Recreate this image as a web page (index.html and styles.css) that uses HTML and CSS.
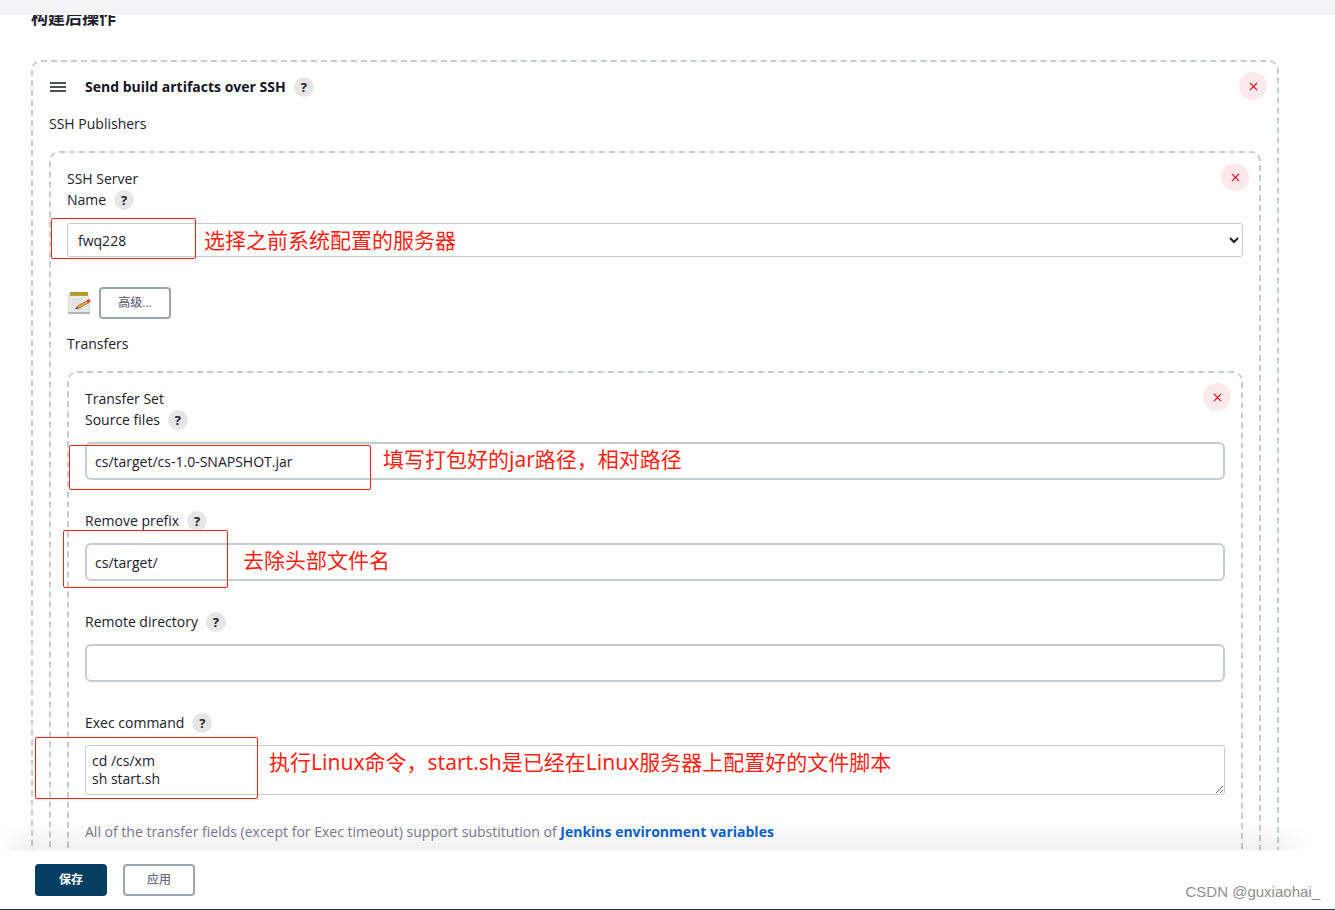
FILE: index.html
```html
<!DOCTYPE html>
<html lang="zh-CN">
<head>
<meta charset="utf-8">
<title>构建后操作</title>
<link rel="stylesheet" href="styles.css">
</head>
<body>
<div class="topbar"></div>
<main class="content">
  <h2 class="section-title">构建后操作</h2>
  <section class="chunk chunk-outer">
    <button class="remove" type="button" aria-label="Remove publisher"><svg viewBox="0 0 10 10"><path d="M1 1l8 8M9 1L1 9"/></svg></button>
    <div class="row title-row">
      <svg class="grip" viewBox="0 0 16 10"><path d="M0 1h16M0 5h16M0 9h16"/></svg>
      <b>Send build artifacts over SSH</b>
      <button class="help" type="button" aria-label="Help: SSH">?</button>
    </div>
    <div class="row publishers">SSH Publishers</div>
    <section class="chunk">
      <button class="remove" type="button" aria-label="Remove server"><svg viewBox="0 0 10 10"><path d="M1 1l8 8M9 1L1 9"/></svg></button>
      <div class="row">SSH Server</div>
      <div class="row"><label for="server">Name</label><button class="help" type="button" aria-label="Help: Name">?</button></div>
      <div class="field field-server">
        <select id="server" class="select"><option>fwq228</option></select>
        <span class="mark mark-server"></span>
        <span class="note note-server">选择之前系统配置的服务器</span>
      </div>
      <div class="advanced">
        <svg class="notepad" viewBox="0 0 24 24">
          <path d="M2 3h19l2 18.500H1z" fill="#e9eae6" stroke="#d6d7d3"/>
          <path d="M1 21h22v2H1z" fill="#b4b5b2"/>
          <path d="M3 1h18v4H3z" fill="#b5a034"/>
          <path d="M4 2h16" stroke="#8a7c30" stroke-dasharray="1 1"/>
          <path d="M5 9h12M5 12h9M4 15h6M4 18h12" stroke="#cfd1d2"/>
          <path d="M9 17.500l2-3 9-4.500 1.500 2-9 5z" fill="#dfa13e" stroke="#926424" stroke-width=".6"/>
          <path d="M19.500 9.500l2-1.200q2.500 0 2 2.500l-2.500 1.500z" fill="#d9443b"/>
          <path d="M8 18.200l2-2.500 1.500 1.800z" fill="#4b4030"/>
        </svg>
        <button class="btn" type="button">高级...</button>
      </div>
      <div class="row transfers">Transfers</div>
      <section class="chunk">
        <button class="remove" type="button" aria-label="Remove transfer set"><svg viewBox="0 0 10 10"><path d="M1 1l8 8M9 1L1 9"/></svg></button>
        <div class="row">Transfer Set</div>
        <div class="row"><label for="source">Source files</label><button class="help" type="button" aria-label="Help: Source files">?</button></div>
        <div class="field">
          <input id="source" class="input" type="text" value="cs/target/cs-1.0-SNAPSHOT.jar">
          <span class="mark mark-source"></span>
          <span class="note note-source">填写打包好的jar路径，相对路径</span>
        </div>
        <div class="row"><label for="prefix">Remove prefix</label><button class="help" type="button" aria-label="Help: Remove prefix">?</button></div>
        <div class="field">
          <input id="prefix" class="input" type="text" value="cs/target/">
          <span class="mark mark-prefix"></span>
          <span class="note note-prefix">去除头部文件名</span>
        </div>
        <div class="row"><label for="remote">Remote directory</label><button class="help" type="button" aria-label="Help: Remote directory">?</button></div>
        <div class="field"><input id="remote" class="input" type="text"></div>
        <div class="row"><label for="exec">Exec command</label><button class="help" type="button" aria-label="Help: Exec command">?</button></div>
        <div class="field field-exec">
          <textarea id="exec" class="textarea" rows="2">cd /cs/xm
sh start.sh</textarea>
          <span class="mark mark-exec"></span>
          <span class="note note-exec">执行Linux命令，start.sh是已经在Linux服务器上配置好的文件脚本</span>
        </div>
        <p class="hint">All of the transfer fields (except for Exec timeout) support substitution of <a href="#">Jenkins environment variables</a></p>
      </section>
    </section>
  </section>
</main>
<footer class="footer">
  <button class="btn btn-primary" type="button">保存</button>
  <button class="btn" type="button">应用</button>
  <span class="watermark">CSDN @guxiaohai_</span>
</footer>
</body>
</html>
```
FILE: styles.css
```css
* { box-sizing: border-box; }
body {
  margin: 0;
  height: 100vh;
  display: flex;
  flex-direction: column;
  overflow: hidden;
  background: #fff;
  color: #20202b;
  font: 14px/21px "Open Sans", "Noto Sans", "Noto Sans CJK SC", sans-serif;
}
button, input, select, textarea { font: inherit; color: inherit; margin: 0; }
.topbar { flex: none; height: 15px; background: #f4f4f7; }
.content { flex: 1; min-height: 0; overflow: hidden; padding: 0 56px 0 31px; }
.section-title { margin: -9px 0 30px; font-size: 17px; line-height: 24px; font-weight: 700; }

.chunk {
  position: relative;
  margin-top: 17px;
  padding: 15px 16px 40px;
  border: 2px dashed #c3ccd1;
  border-radius: 10px;
}
.chunk-outer { margin-top: 0; padding-top: 14px; }
.row { display: flex; align-items: center; height: 21px; }
.title-row { padding-left: 1px; }
.title-row b { font-weight: 700; color: #14141f; }
.grip { width: 16px; height: 10px; margin-right: 19px; stroke: #14141f; stroke-width: 1.5; }
.publishers { margin-top: 16px; }
.transfers { margin-top: 14px; }

.help {
  width: 20px; height: 20px; margin-left: 8px; padding: 0;
  border: 0; border-radius: 50%;
  background: #e6e6e6;
  font-size: 13px; line-height: 20px; font-weight: 700; text-align: center;
}
.remove {
  position: absolute; top: 10px; right: 10px;
  display: grid; place-items: center;
  width: 28px; height: 28px; padding: 0;
  border: 0; border-radius: 50%;
  background: #fce9eb;
}
.remove svg { width: 9px; height: 9px; stroke: #e6001f; stroke-width: 1.4; }

.field { position: relative; margin: 12px 0 30px; }
.field-server { margin-top: 13px; }
.field-exec { margin-bottom: 26px; }
.select, .input, .textarea { display: block; width: 100%; background: #fff; }
.select { height: 34px; padding: 0 6px; border: 1px solid #c3ccd1; border-radius: 3px; }
.input { height: 38px; padding: 0 8px; border: 2px solid #c3ccd1; border-radius: 6px; }
.textarea { height: 50px; padding: 6px; border: 1px solid #c3ccd1; border-radius: 3px; line-height: 18px; resize: vertical; overflow: hidden; }

.mark { position: absolute; border: 1px solid #ff1f14; border-radius: 2px; pointer-events: none; }
.mark-server { left: -16px; top: -5px; width: 145px; height: 41px; }
.mark-source { left: -16px; top: 3px; width: 302px; height: 45px; }
.mark-prefix { left: -22px; top: -13px; width: 165px; height: 58px; }
.mark-exec { left: -50px; top: -8px; width: 223px; height: 62px; }
.note { position: absolute; top: 2px; color: #ff1f14; font: 21px/30px "Noto Sans", "Noto Sans CJK SC", sans-serif; white-space: nowrap; pointer-events: none; }
.note-server { left: 137px; }
.note-source { left: 298px; }
.note-prefix { left: 158px; }
.note-exec { left: 184px; }

.advanced { display: flex; align-items: center; gap: 8px; }
.notepad { width: 24px; height: 24px; fill: none; }
.btn {
  width: 72px; height: 32px; padding: 0;
  border: 2px solid #98a6af; border-radius: 4px;
  background: #fff; color: #6b6880;
  font-size: 12px; line-height: 18px; font-weight: 500;
}
.btn-primary { border-color: #063e61; background: #063e61; color: #fff; font-weight: 700; }
.hint { margin: 0; color: #7c798d; }
.hint a { color: #0b63ce; font-weight: 700; text-decoration: none; }

.footer {
  position: relative;
  flex: none;
  display: flex; align-items: center; gap: 16px;
  height: 60px; padding: 0 15px 0 35px;
  border-bottom: 1px solid #253238;
  background: #fff;
}
.footer::before {
  content: "";
  position: absolute; left: 0; right: 25px; bottom: 100%;
  height: 28px;
  background: linear-gradient(to top, rgba(0, 0, 0, .06), transparent);
  mask-image: linear-gradient(to right, transparent, #000 30px, #000 calc(100% - 40px), transparent);
  pointer-events: none;
}
.watermark { margin: 24px 0 0 auto; color: #8e8e8e; font: 15px/20px "Liberation Sans", sans-serif; }
```
